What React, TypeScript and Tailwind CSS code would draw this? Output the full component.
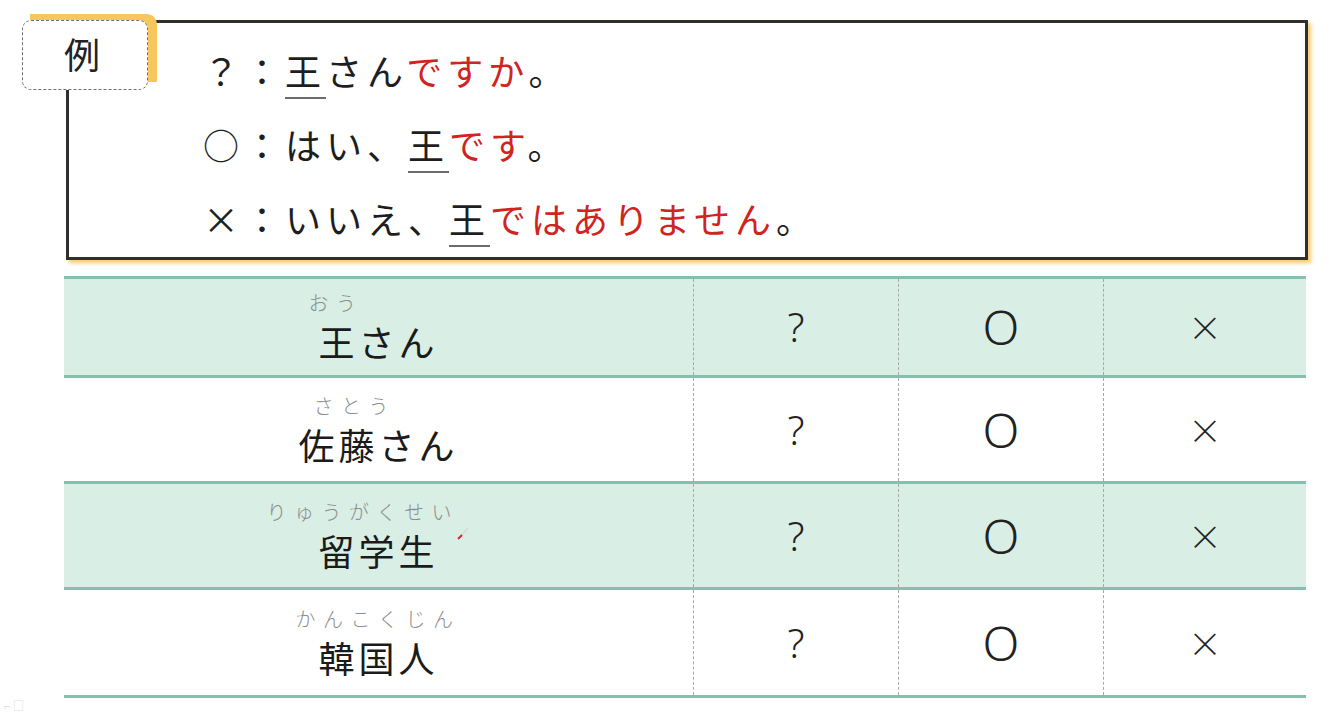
import React from "react";

const JP = { fontFamily: '"Noto Sans CJK JP", "Noto Sans", sans-serif' };

type Row = { kana: string; word: string; kanaMl: string; shaded: boolean; h: string };

const rows: Row[] = [
  { kana: "おう", word: "王さん", kanaMl: "ml-[-10px]", shaded: true, h: "h-[99px]" },
  { kana: "さとう", word: "佐藤さん", kanaMl: "ml-[15px]", shaded: false, h: "h-[106px]" },
  { kana: "りゅうがくせい", word: "留学生", kanaMl: "ml-[-52px]", shaded: true, h: "h-[106px]" },
  { kana: "かんこくじん", word: "韓国人", kanaMl: "ml-[-23px]", shaded: false, h: "h-[108px]" },
];

function U({ children }: { children: React.ReactNode }) {
  return <span className="border-b-[2px] border-[#6b6b6b] pb-[1px]">{children}</span>;
}

function R({ children }: { children: React.ReactNode }) {
  return <span className="text-[#d0241f]">{children}</span>;
}

export default function App() {
  return (
    <div className="w-[1335px] h-[714px] bg-white overflow-hidden relative" style={JP}>
      {/* Example box */}
      <div className="relative ml-[66px] mt-[20px] w-[1242px] h-[240px]">
        <div className="w-full h-full border-[3px] border-[#2f2f2f] bg-white shadow-[3px_3px_4px_#f6c96d]">
          <div className="flex flex-col pl-[134px] pt-[10px] text-[36px] leading-[74px] tracking-[5px] text-[#1e1e1e] font-normal">
            <div>？：<U>王</U>さん<R>ですか</R>。</div>
            <div>○：はい、<U>王</U><R>です</R>。</div>
            <div>×：いいえ、<U>王</U><R>ではありません</R>。</div>
          </div>
        </div>
        {/* tag with yellow backing */}
        <div className="absolute left-[-36px] top-[-6px] w-[127px] h-[68px] bg-[#f7c65c] rounded-tr-[10px]" />
        <div className="absolute left-[-44px] top-[0px] w-[126px] h-[70px] bg-white border-[1.5px] border-dashed border-[#6e6e6e] rounded-[9px] flex items-center justify-center">
          <span className="text-[36px] font-normal text-[#222] mr-[6px] mb-[4px]">例</span>
        </div>
      </div>

      {/* Table */}
      <div className="ml-[64px] mt-[16px] w-[1242px] border-t-[3px] border-[#86bfae]">
        {rows.map((r, i) => (
          <div
            key={i}
            className={`grid grid-cols-[629px_205px_205px_203px] border-b-[3px] border-[#86bfae] ${r.h} ${
              r.shaded ? "bg-[#d9eee5]" : "bg-white"
            }`}
          >
            <div className="flex justify-center items-center">
              <div className="flex flex-col items-start">
                <div
                  className={`w-0 whitespace-nowrap text-[20px] leading-[26px] tracking-[7.5px] text-[#8d8d8d] font-light ${r.kanaMl}`}
                >
                  {r.kana}
                </div>
                <div className="whitespace-nowrap text-[36px] leading-[46px] tracking-[4px] text-[#1b1b1b] mt-[2px]">
                  {r.word}
                </div>
              </div>
            </div>
            <div className="flex items-center justify-center border-l border-dashed border-[#a9a9a9]">
              <span className="text-[40px] font-light text-[#222] leading-none" style={{ fontFamily: '"Noto Sans", sans-serif' }}>?</span>
            </div>
            <div className="flex items-center justify-center border-l border-dashed border-[#a9a9a9]">
              <span className="text-[48px] font-light text-[#222] leading-none" style={{ fontFamily: '"Noto Sans", sans-serif' }}>O</span>
            </div>
            <div className="flex items-center justify-center border-l border-dashed border-[#a9a9a9]">
              <span className="text-[34px] font-light text-[#222] leading-none">×</span>
            </div>
          </div>
        ))}
      </div>

      {/* small red pen mark */}
      <svg className="absolute left-[456px] top-[526px]" width="14" height="16" viewBox="0 0 14 16">
        <line x1="12" y1="2" x2="4" y2="11" stroke="#d8d8d8" strokeWidth="1.5" />
        <line x1="6" y1="9" x2="2" y2="13" stroke="#d8262a" strokeWidth="2" />
      </svg>

      {/* faint remnants at bottom-left */}
      <div className="absolute left-[4px] top-[700px] text-[11px] text-[#dcdcdc] leading-none">⌐ □</div>
    </div>
  );
}
